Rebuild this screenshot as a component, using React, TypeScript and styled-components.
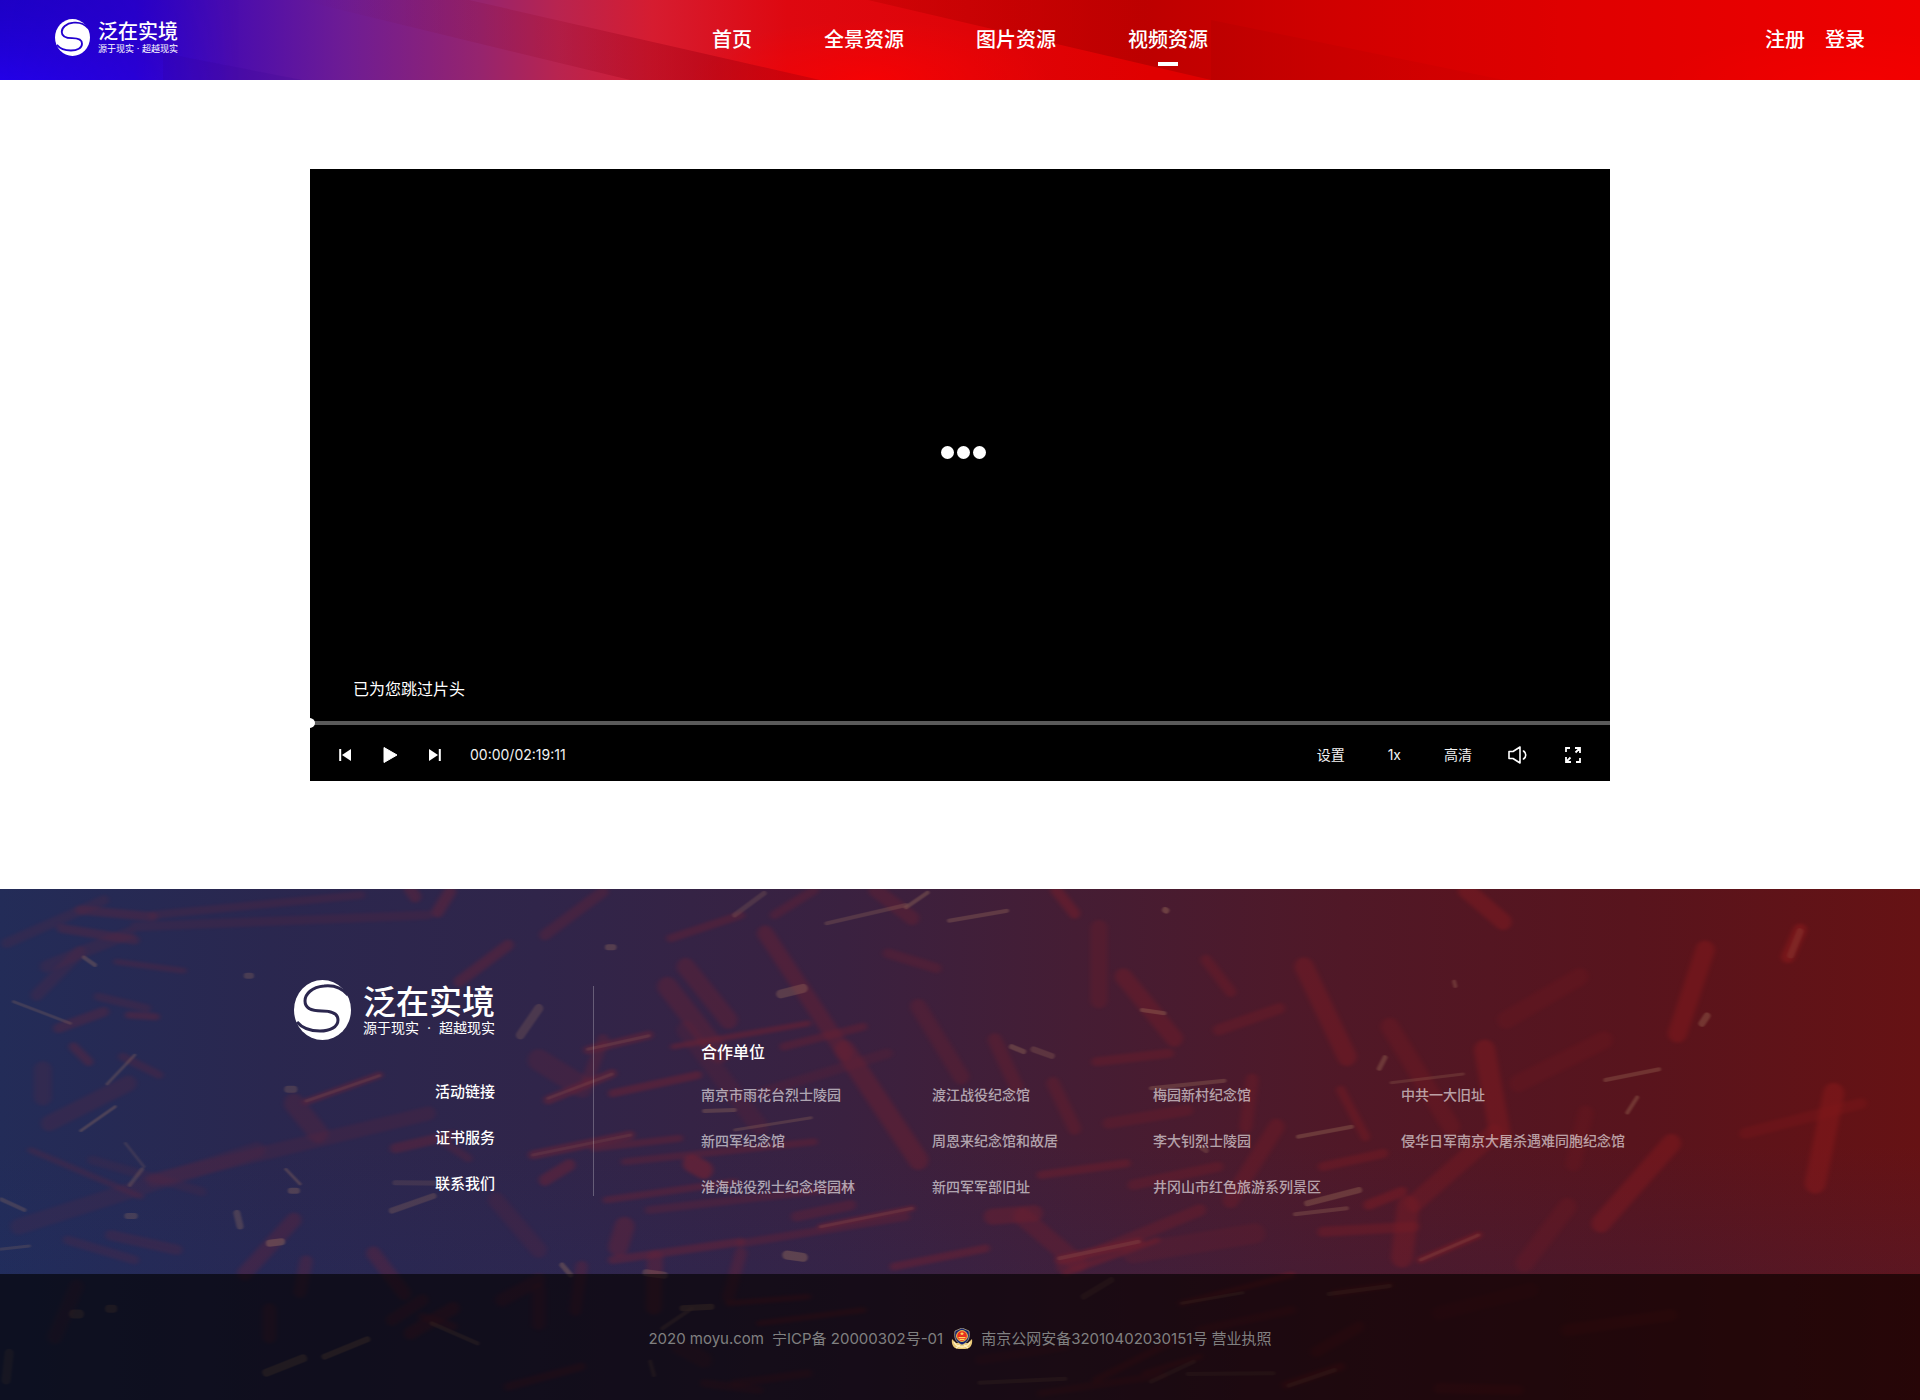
import React, { useId } from "react";
import styled, { createGlobalStyle, css } from "styled-components";

const GlobalStyle = createGlobalStyle`
  *, *::before, *::after { box-sizing: border-box; }
  body {
    margin: 0;
    background: #fff;
    color: #fff;
    font-family: Inter, "Noto Sans CJK SC", sans-serif;
  }
  ul { list-style: none; margin: 0; padding: 0; }
  h2, p { margin: 0; }
  a { color: inherit; text-decoration: none; white-space: nowrap; }
  li a { display: block; }
`;

const Page = styled.div`
  min-height: 100vh;
  display: flex;
  flex-direction: column;
`;

/* ---------- header ---------- */

const Header = styled.header`
  position: relative;
  isolation: isolate;
  height: 80px;
  padding: 0 55px;
  display: grid;
  grid-template-columns: 1fr auto 1fr;
  align-items: center;
  background: linear-gradient(
    90deg,
    #2000d0 0%,
    #2a00cc 7%,
    #4a0cae 12%,
    #6e1c94 18%,
    #96246e 25%,
    #b82450 29%,
    #d61c30 34%,
    #de0810 41%,
    #e00000 60%,
    #de0000 80%,
    #ee0000 100%
  );
`;

const Backdrop = styled.svg`
  position: absolute;
  inset: 0;
  z-index: -1;
  width: 100%;
  height: 100%;
`;

const Nav = styled.nav`
  display: flex;
  gap: 72px;
`;

const Account = styled.div`
  display: flex;
  justify-content: flex-end;
  gap: 20px;
`;

const NavLink = styled.a<{ $active?: boolean }>`
  position: relative;
  font-size: 20px;
  line-height: 30px;
  font-weight: 500;
  ${(p) =>
    p.$active &&
    css`
      &::after {
        content: "";
        position: absolute;
        left: calc(50% - 10px);
        top: 37px;
        width: 20px;
        height: 4px;
        background: #fff;
      }
    `}
`;

/* ---------- logo ---------- */

type Size = { $large?: boolean };

const LogoLink = styled.a<Size>`
  display: flex;
  align-items: flex-start;
  justify-self: start;
  gap: ${(p) => (p.$large ? 12 : 8)}px;
  margin-bottom: ${(p) => (p.$large ? 0 : 5)}px;
`;

const Emblem = styled.svg<Size>`
  flex: none;
  width: ${(p) => (p.$large ? 57 : 35)}px;
  height: ${(p) => (p.$large ? 60 : 37)}px;
`;

const LogoText = styled.span<Size>`
  display: grid;
  padding-top: ${(p) => (p.$large ? 5 : 2)}px;
  line-height: 1;
`;

const LogoName = styled.span<Size>`
  font-size: ${(p) => (p.$large ? 33 : 20)}px;
  line-height: ${(p) => (p.$large ? 34 : 22)}px;
  font-weight: 500;
`;

const LogoMotto = styled.span<Size>`
  display: flex;
  justify-content: space-between;
  font-size: ${(p) => (p.$large ? 14 : 9)}px;
  line-height: ${(p) => (p.$large ? 18 : 12)}px;
`;

function Logo({ large }: { large?: boolean }) {
  const id = useId();
  return (
    <LogoLink href="#" $large={large}>
      <Emblem $large={large} viewBox="0 0 57 60" preserveAspectRatio="none" aria-hidden="true">
        <mask id={id}>
          <ellipse cx="28.5" cy="30" rx="28.5" ry="30" fill="#fff" />
          <path
            d="M54 15C48 8 39 5 30 6C18 7 11 14 11 21C11 29 18 31 28 31C38 31 44 33 44 40C44 47 36 51 26 51C16 51 8 48 3 42"
            fill="none"
            stroke="#000"
            strokeWidth="3"
          />
        </mask>
        <rect width="57" height="60" fill="#fff" mask={`url(#${id})`} />
      </Emblem>
      <LogoText $large={large}>
        <LogoName $large={large}>泛在实境</LogoName>
        <LogoMotto $large={large}>
          <span>源于现实</span>
          <span>·</span>
          <span>超越现实</span>
        </LogoMotto>
      </LogoText>
    </LogoLink>
  );
}

/* ---------- player ---------- */

const Main = styled.main`
  padding: 89px 24px 108px;
`;

const Player = styled.section`
  max-width: 1300px;
  height: 612px;
  margin: 0 auto;
  display: flex;
  flex-direction: column;
  background: #000;
`;

const Stage = styled.div`
  flex: 1;
  display: flex;
  flex-direction: column;
  align-items: center;
  padding: 277px 43px 18px;
`;

const Loader = styled.div`
  display: flex;
  gap: 3px;
  padding-left: 6px;
  margin-bottom: auto;
`;

const LoaderDot = styled.span`
  width: 13px;
  height: 13px;
  border-radius: 50%;
  background: #fff;
`;

const Notice = styled.p`
  align-self: flex-start;
  font-size: 16px;
  line-height: 22px;
`;

const Seek = styled.input`
  appearance: none;
  display: block;
  width: calc(100% + 6px);
  height: 10px;
  margin: 0 0 0 -6px;
  background: linear-gradient(#5a5a5a, #5a5a5a) center / 100% 4px no-repeat;
  &::-webkit-slider-thumb {
    appearance: none;
    width: 11px;
    height: 10px;
    border-radius: 50%;
    background: #fff;
  }
`;

const SeekClip = styled.div`
  overflow: hidden;
`;

const Controls = styled.div`
  display: flex;
  justify-content: space-between;
  align-items: center;
  height: 53px;
  padding: 1px 28px 0;
`;

const ControlGroup = styled.div<{ $gap: number }>`
  display: flex;
  align-items: center;
  gap: ${(p) => p.$gap}px;
`;

const ControlButton = styled.button`
  display: flex;
  align-items: center;
  padding: 0;
  border: 0;
  background: none;
  color: #f2f2f2;
  font: inherit;
  font-size: 14px;
  line-height: 20px;
  cursor: pointer;
`;

const Time = styled.span`
  font-size: 14px;
  line-height: 20px;
  color: #f2f2f2;
`;

/* ---------- footer ---------- */

const Footer = styled.footer`
  position: relative;
  isolation: isolate;
  flex: 1;
  display: flex;
  flex-direction: column;
  background:
    linear-gradient(180deg, rgba(20, 50, 120, 0) 50%, rgba(20, 50, 120, 0.12) 75%, rgba(20, 50, 120, 0) 76%),
    linear-gradient(
      90deg,
      #232c58 0%,
      #2a274f 14%,
      #30254a 28%,
      #3a2140 44%,
      #451d34 56%,
      #501827 70%,
      #58141d 85%,
      #661214 100%
    );
`;

const Sparks = styled(Backdrop)`
  overflow: hidden;
`;

const Soft = styled.g<{ $blur: number; $opacity: number }>`
  filter: blur(${(p) => p.$blur}px);
  opacity: ${(p) => p.$opacity};
`;

const FooterBody = styled.div`
  width: 100%;
  max-width: 1332px;
  margin: 0 auto;
  padding: 91px 0 76px;
  display: flex;
  align-items: flex-start;
`;

const Brand = styled.div`
  display: grid;
  justify-items: end;
  gap: 41px;
`;

const BrandLinks = styled.ul`
  display: grid;
  gap: 24px;
  font-size: 15px;
  line-height: 22px;
  font-weight: 500;
`;

const Divider = styled.div`
  width: 1px;
  height: 210px;
  margin: 6px 107px 0 98px;
  background: rgba(255, 255, 255, 0.26);
`;

const Partners = styled.section`
  flex: 1;
  padding-top: 60px;
`;

const PartnersTitle = styled.h2`
  margin-bottom: 20px;
  font-size: 16px;
  line-height: 24px;
  font-weight: 500;
`;

const PartnerGrid = styled.ul`
  display: grid;
  grid-template-columns: 231px 221px 248px 1fr;
  row-gap: 24px;
  font-size: 14px;
  line-height: 22px;
  font-weight: 500;
  color: rgba(255, 255, 255, 0.6);
`;

const Legal = styled.div`
  flex: 1;
  min-height: 124px;
  padding: 4px 0 0;
  display: flex;
  justify-content: center;
  align-items: center;
  gap: 8px;
  background: rgba(0, 0, 0, 0.62);
  color: #808080;
  font-size: 15px;
  line-height: 22px;
`;

const NAV = ["首页", "全景资源", "图片资源", "视频资源"];
const BRAND_LINKS = ["活动链接", "证书服务", "联系我们"];
const PARTNERS = [
  "南京市雨花台烈士陵园", "渡江战役纪念馆", "梅园新村纪念馆", "中共一大旧址",
  "新四军纪念馆", "周恩来纪念馆和故居", "李大钊烈士陵园", "侵华日军南京大屠杀遇难同胞纪念馆",
  "淮海战役烈士纪念塔园林", "新四军军部旧址", "井冈山市红色旅游系列景区",
];

/* x1, y1, x2, y2, width, opacity */
type Streak = [number, number, number, number, number, number];

const EMBERS: Streak[] = [
  [130, 90, 250, 110, 9, 0.4], [250, 105, 590, 45, 8, 0.28], [220, 140, 700, 105, 9, 0.25], [715, 95, 735, 35, 12, 0.55],
  [670, 28, 678, 50, 12, 0.5], [890, 165, 985, 35, 11, 0.4], [1095, 175, 1210, 105, 8, 0.45], [1265, 105, 1330, 30, 9, 0.4],
  [1430, 30, 1490, 115, 14, 0.4], [60, 345, 130, 215, 12, 0.28], [75, 260, 210, 160, 12, 0.25], [100, 145, 220, 180, 9, 0.4],
  [10, 190, 170, 60, 10, 0.25], [190, 245, 300, 272, 6, 0.35], [750, 305, 830, 195, 11, 0.5], [95, 445, 170, 395, 10, 0.42],
  [210, 405, 255, 410, 7, 0.5], [160, 350, 240, 385, 8, 0.3], [70, 570, 70, 650, 18, 0.25], [80, 730, 210, 610, 16, 0.28],
  [120, 500, 145, 545, 9, 0.5], [200, 530, 260, 585, 8, 0.35], [500, 665, 620, 585, 7, 0.6], [480, 670, 520, 760, 20, 0.35],
  [250, 900, 700, 700, 14, 0.25], [30, 1040, 420, 810, 16, 0.22], [50, 810, 230, 950, 6, 0.35], [150, 840, 330, 935, 9, 0.2],
  [400, 1180, 480, 1020, 15, 0.42], [500, 1145, 490, 1235, 13, 0.4], [610, 1120, 660, 1240, 14, 0.45], [180, 1065, 290, 1110, 10, 0.3],
  [110, 1080, 220, 1140, 9, 0.28], [645, 805, 740, 765, 10, 0.5], [720, 780, 765, 835, 8, 0.35], [870, 825, 1030, 765, 9, 0.6],
  [890, 900, 930, 855, 12, 0.6], [895, 660, 1000, 580, 9, 0.62], [1000, 640, 1140, 585, 8, 0.6], [960, 510, 1060, 465, 9, 0.55],
  [880, 540, 950, 620, 22, 0.3], [960, 600, 985, 480, 12, 0.4], [1090, 320, 1175, 520, 20, 0.42], [1120, 260, 1190, 420, 18, 0.42],
  [1250, 160, 1380, 520, 16, 0.48], [1380, 510, 1500, 840, 20, 0.5], [1100, 500, 1320, 430, 6, 0.6], [1280, 500, 1410, 440, 8, 0.45],
  [1020, 845, 1330, 785, 7, 0.45], [970, 805, 1110, 775, 7, 0.5], [990, 960, 1200, 905, 7, 0.5], [1060, 990, 1390, 920, 8, 0.38],
  [1340, 1040, 1490, 985, 6, 0.68], [1300, 1010, 1390, 975, 10, 0.42], [1000, 1140, 1210, 1085, 8, 0.55], [1210, 1090, 1480, 1010, 8, 0.42],
  [1020, 1040, 1010, 1100, 20, 0.5], [1070, 1135, 1068, 1280, 16, 0.5], [1210, 1120, 1190, 1250, 12, 0.42], [1460, 1160, 1610, 1105, 8, 0.55],
  [810, 960, 880, 1110, 16, 0.25], [1450, 220, 1530, 265, 10, 0.35], [950, 1160, 940, 1290, 12, 0.42], [880, 1230, 880, 1330, 14, 0.4],
  [1120, 450, 1240, 740, 18, 0.25], [1500, 380, 1570, 590, 16, 0.35], [1130, 850, 1150, 870, 18, 0.8], [1240, 640, 1450, 520, 10, 0.25],
  [1725, 30, 1755, 100, 11, 0.6], [1795, 145, 1795, 360, 17, 0.32], [1835, 290, 1918, 475, 17, 0.48], [1970, 240, 2010, 335, 11, 0.42],
  [2130, 260, 2200, 530, 19, 0.52], [2270, 440, 2370, 740, 18, 0.35], [2395, 30, 2455, 125, 17, 0.62], [2425, 510, 2450, 760, 21, 0.6],
  [2440, 760, 2310, 970, 18, 0.45], [2785, 210, 2740, 460, 19, 0.6], [2730, 790, 2615, 1030, 19, 0.6], [2995, 640, 2965, 910, 21, 0.65],
  [1625, 480, 1660, 620, 14, 0.38], [1720, 610, 1755, 745, 13, 0.38], [2085, 740, 2010, 960, 16, 0.42], [2045, 600, 2035, 740, 13, 0.4],
  [2300, 980, 2290, 1130, 22, 0.52], [2190, 630, 2230, 770, 9, 0.5], [1990, 450, 2090, 385, 11, 0.4], [1790, 545, 1910, 520, 9, 0.42],
  [1670, 1010, 1760, 1150, 18, 0.42], [1620, 1010, 1690, 1000, 16, 0.5], [1735, 1160, 1960, 990, 12, 0.42], [1730, 1140, 1860, 1085, 9, 0.68],
  [1740, 1180, 1890, 1080, 6, 0.6], [2160, 860, 2260, 820, 9, 0.5], [2160, 1055, 2310, 1040, 10, 0.5], [2235, 975, 2290, 935, 10, 0.6],
  [2320, 1140, 2415, 1065, 7, 0.65], [1700, 885, 1840, 850, 8, 0.5], [1850, 915, 1990, 860, 10, 0.4], [1810, 730, 1940, 690, 11, 0.35],
  [2460, 420, 2580, 290, 18, 0.22], [2480, 610, 2620, 480, 18, 0.22], [2590, 700, 2570, 850, 16, 0.22],
  [2560, 980, 2490, 1150, 18, 0.28], [2850, 760, 3040, 670, 11, 0.35], [2920, 230, 2940, 150, 13, 0.75], [1850, 1120, 2050, 1060, 20, 0.25],
  [1240, 1330, 1410, 1290, 6, 0.6], [1190, 1270, 1320, 1250, 6, 0.6], [1200, 1510, 1320, 1480, 8, 0.42], [90, 1370, 125, 1220, 15, 0.3],
  [640, 1320, 690, 1260, 12, 0.42], [670, 1360, 740, 1285, 13, 0.5], [820, 1260, 880, 1200, 13, 0.4], [830, 1520, 950, 1460, 8, 0.5],
  [440, 1290, 440, 1370, 14, 0.42], [2180, 1240, 2270, 1215, 7, 0.5], [1930, 1270, 2110, 1185, 6, 0.6], [1790, 1500, 1930, 1370, 7, 0.5],
  [1870, 1480, 1960, 1430, 6, 0.5], [2100, 1515, 2190, 1460, 8, 0.6], [2150, 1415, 2220, 1340, 11, 0.42], [1960, 1350, 2110, 1290, 8, 0.4],
  [2350, 1300, 2500, 1230, 14, 0.25], [2560, 1350, 2730, 1305, 12, 0.4], [1700, 1540, 1900, 1485, 7, 0.4], [2350, 1525, 2480, 1530, 10, 0.45],
  [1150, 1510, 1240, 1530, 8, 0.4], [1110, 1400, 1150, 1440, 16, 0.3], [740, 1340, 690, 1310, 8, 0.5], [1600, 1440, 1740, 1400, 9, 0.3],
];

const SPARKS: Streak[] = [
  [137, 232, 155, 255, 4, 0.6], [22, 365, 115, 430, 3, 0.45], [175, 612, 220, 525, 3, 0.55], [132, 752, 188, 680, 3, 0.6],
  [212, 915, 232, 868, 4, 0.5], [205, 790, 235, 860, 3, 0.35], [467, 868, 490, 912, 3, 0.6], [387, 1000, 392, 1038, 7, 0.55],
  [2, 958, 40, 990, 4, 0.5], [0, 1108, 48, 1098, 3, 0.4], [640, 992, 708, 948, 6, 0.5], [645, 908, 735, 910, 5, 0.35],
  [850, 465, 880, 385, 9, 0.45], [1275, 342, 1312, 325, 9, 0.6], [1350, 130, 1480, 75, 4, 0.5], [1480, 82, 1515, 38, 4, 0.65],
  [1200, 105, 1248, 40, 5, 0.42], [1550, 122, 1645, 92, 4, 0.6], [1150, 693, 1200, 690, 4, 0.6], [1200, 750, 1325, 713, 3, 0.5],
  [1285, 1125, 1312, 1132, 9, 0.7], [440, 1090, 460, 1085, 7, 0.7], [470, 628, 480, 628, 7, 0.5], [475, 932, 485, 932, 6, 0.6],
  [993, 202, 1002, 202, 6, 0.6], [403, 287, 410, 287, 6, 0.5], [208, 1008, 220, 1008, 6, 0.5], [918, 1155, 932, 1185, 5, 0.65],
  [1055, 1178, 1085, 1186, 7, 0.55], [1865, 390, 1902, 400, 4, 0.65], [1652, 500, 1672, 515, 5, 0.65], [1688, 508, 1718, 528, 6, 0.5],
  [1880, 625, 2000, 602, 4, 0.6], [2120, 770, 2208, 740, 4, 0.65], [2253, 565, 2262, 533, 5, 0.65], [2272, 608, 2390, 582, 3, 0.45],
  [2622, 600, 2710, 568, 4, 0.6], [2658, 698, 2674, 652, 4, 0.65], [2780, 430, 2788, 408, 7, 0.65], [2375, 305, 2377, 318, 4, 0.6],
  [1903, 90, 1905, 92, 6, 0.75], [2135, 970, 2220, 930, 6, 0.65], [2115, 1003, 2200, 985, 4, 0.55], [1960, 800, 1970, 812, 5, 0.5],
  [1730, 1135, 1860, 1085, 4, 0.35], [1340, 1040, 1490, 985, 3, 0.3], [895, 655, 1000, 582, 3, 0.3], [500, 663, 620, 587, 3, 0.3],
  [960, 508, 1060, 467, 3, 0.35], [870, 825, 1030, 765, 3, 0.25], [2320, 1140, 2415, 1065, 3, 0.35], [2925, 225, 2940, 155, 7, 0.3],
  [1115, 1285, 1162, 1280, 6, 0.75], [435, 1478, 495, 1435, 8, 0.7], [530, 1430, 600, 1378, 6, 0.75], [705, 1330, 780, 1390, 4, 0.6],
  [1082, 1345, 1130, 1285, 4, 0.55], [1062, 1445, 1068, 1485, 4, 0.5], [15, 1420, 10, 1500, 9, 0.4], [120, 1302, 130, 1302, 9, 0.6],
  [178, 1286, 185, 1286, 8, 0.6], [2170, 1242, 2270, 1218, 4, 0.5], [1600, 1508, 1740, 1496, 4, 0.5], [1940, 1482, 2080, 1480, 4, 0.4],
  [2105, 1517, 2180, 1470, 4, 0.45], [1880, 1505, 1950, 1445, 4, 0.4], [1770, 1250, 1815, 1200, 6, 0.4], [1930, 1270, 2030, 1238, 3, 0.5],
];

function Lines({ items, color }: { items: Streak[]; color: string }) {
  return (
    <g stroke={color} strokeLinecap="round">
      {items.map(([x1, y1, x2, y2, w, o], i) => (
        <line key={i} x1={x1} y1={y1} x2={x2} y2={y2} strokeWidth={w} strokeOpacity={o} vectorEffect="non-scaling-stroke" />
      ))}
    </g>
  );
}

function HeaderBackdrop() {
  return (
    <Backdrop viewBox="0 0 1920 80" preserveAspectRatio="none" aria-hidden="true">
      <defs>
        <linearGradient id="band-left"><stop offset="0" stopColor="#600030" stopOpacity="0" /><stop offset=".5" stopColor="#900020" stopOpacity=".2" /><stop offset=".8" stopColor="#a80010" stopOpacity=".5" /><stop offset="1" stopColor="#b80008" stopOpacity=".5" /></linearGradient>
        <linearGradient id="band-mid"><stop offset="0" stopColor="#b80000" stopOpacity=".4" /><stop offset=".4" stopColor="#b40000" stopOpacity=".8" /><stop offset="1" stopColor="#c80000" stopOpacity="0" /></linearGradient>
        <linearGradient id="band-right"><stop offset="0" stopColor="#a80000" stopOpacity=".5" /><stop offset="1" stopColor="#b80000" stopOpacity=".3" /></linearGradient>
        <radialGradient id="glow-mid"><stop offset="0" stopColor="#ff0000" stopOpacity=".7" /><stop offset="1" stopColor="#ff0000" stopOpacity="0" /></radialGradient>
        <linearGradient id="glow-left" x1="0" y1="1" x2="0" y2="0"><stop offset="0" stopColor="#2600ff" stopOpacity=".5" /><stop offset="1" stopColor="#1800b0" stopOpacity=".3" /></linearGradient>
        <linearGradient id="fade-left"><stop offset="0" stopColor="#fff" /><stop offset="1" stopColor="#000" /></linearGradient>
        <mask id="left-mask"><rect width="240" height="80" fill="url(#fade-left)" /></mask>
      </defs>
      <rect width="240" height="80" fill="url(#glow-left)" mask="url(#left-mask)" />
      <path d="M163 53L302 80H163Z" fill="#30008c" opacity=".15" />
      <ellipse cx="870" cy="80" rx="180" ry="60" fill="url(#glow-mid)" />
      <path d="M300 0H469L820 80H630Z" fill="url(#band-left)" />
      <path d="M868 0H1560V80H1211Z" fill="url(#band-mid)" />
      <path d="M1211 20L1504 80H1211Z" fill="url(#band-right)" opacity=".5" />
      <ellipse cx="1860" cy="80" rx="200" ry="50" fill="url(#glow-mid)" opacity=".5" />
    </Backdrop>
  );
}

function PoliceBadge() {
  return (
    <svg width="22" height="22" viewBox="0 0 22 22" role="img" aria-label="公安备案">
      <path d="M1 11C0 17 3 21 8 21H14C19 21 22 17 21 11L17 15H5Z" fill="#e9c877" />
      <path d="M3 14C5 18 8 19 11 19S17 18 19 14M5 20L9 17M17 20L13 17" fill="none" stroke="#fff0c0" strokeWidth="1.3" />
      <path d="M11 0L18 3C19 9 18 14 11 17C4 14 3 9 4 3Z" fill="#15246e" stroke="#e8d9a0" strokeWidth=".6" />
      <circle cx="11" cy="8" r="5.4" fill="#e8301f" stroke="#f4c84c" strokeWidth="1" />
      <path d="M11 3.6L11.6 5H13L12 6L12.300 7.300L11 6.600L9.700 7.300L10 6L9 5H10.400ZM7.500 9H14.500V10.300H7.500ZM8.500 11H13.500V12H8.500Z" fill="#ffd65a" />
    </svg>
  );
}

export default function App() {
  return (
    <Page>
      <GlobalStyle />
      <Header>
        <HeaderBackdrop />
        <Logo />
        <Nav>
          {NAV.map((label) => (
            <NavLink key={label} href="#" $active={label === "视频资源"}>{label}</NavLink>
          ))}
        </Nav>
        <Account>
          <NavLink href="#">注册</NavLink>
          <NavLink href="#">登录</NavLink>
        </Account>
      </Header>

      <Main>
        <Player>
          <Stage>
            <Loader><LoaderDot /><LoaderDot /><LoaderDot /></Loader>
            <Notice>已为您跳过片头</Notice>
          </Stage>
          <SeekClip>
            <Seek type="range" min="0" max="8351" defaultValue="0" aria-label="播放进度" />
          </SeekClip>
          <Controls>
            <ControlGroup $gap={29}>
              <ControlButton type="button" aria-label="上一个">
                <svg width="14" height="16" viewBox="0 0 14 16"><path d="M2.200 2V14" stroke="#fff" strokeWidth="2" /><path d="M13 2V14L4 8Z" fill="#fff" /></svg>
              </ControlButton>
              <ControlButton type="button" aria-label="播放">
                <svg width="18" height="18" viewBox="0 0 18 18"><path d="M3 1.500L16 9L3 16.500Z" fill="#fff" stroke="#fff" strokeLinejoin="round" /></svg>
              </ControlButton>
              <ControlButton type="button" aria-label="下一个">
                <svg width="13" height="16" viewBox="0 0 13 16"><path d="M11.800 2V14" stroke="#fff" strokeWidth="2" /><path d="M1 2V14L10 8Z" fill="#fff" /></svg>
              </ControlButton>
              <Time>00:00/02:19:11</Time>
            </ControlGroup>
            <ControlGroup $gap={36}>
              <ControlGroup $gap={43}>
                <ControlButton type="button">设置</ControlButton>
                <ControlButton type="button">1x</ControlButton>
                <ControlButton type="button">高清</ControlButton>
              </ControlGroup>
              <ControlButton type="button" aria-label="音量">
                <svg width="20" height="18" viewBox="0 0 20 18" fill="none" stroke="#fff" strokeWidth="1.600" strokeLinejoin="round"><path d="M1 5.500H5L12 1V17L5 12.500H1Z" /><path d="M15.500 5C18.500 7 18.500 11 15.500 13" strokeLinecap="round" /></svg>
              </ControlButton>
              <ControlButton type="button" aria-label="全屏">
                <svg width="18" height="16" viewBox="0 0 18 16" fill="none" stroke="#fff" strokeWidth="1.800"><path d="M2 5V1H6M11 1H16V6M16 1L11.500 5.500M16 11V15H12M7 15H2V10M2 15L6.500 10.500" /></svg>
              </ControlButton>
            </ControlGroup>
          </Controls>
        </Player>
      </Main>

      <Footer>
        <Sparks viewBox="0 27 3136 1533" preserveAspectRatio="none" aria-hidden="true">
          <Soft $blur={4} $opacity={0.4}><Lines items={EMBERS} color="#b02020" /></Soft>
          <Soft $blur={2} $opacity={0.5}><Lines items={SPARKS} color="#a87c60" /></Soft>
        </Sparks>
        <FooterBody>
          <Brand>
            <Logo large />
            <BrandLinks>
              {BRAND_LINKS.map((label) => <li key={label}><a href="#">{label}</a></li>)}
            </BrandLinks>
          </Brand>
          <Divider />
          <Partners>
            <PartnersTitle>合作单位</PartnersTitle>
            <PartnerGrid>
              {PARTNERS.map((name) => <li key={name}><a href="#">{name}</a></li>)}
            </PartnerGrid>
          </Partners>
        </FooterBody>
        <Legal>
          <span>2020 moyu.com</span>
          <a href="#">宁ICP备 20000302号-01</a>
          <PoliceBadge />
          <a href="#">南京公网安备32010402030151号 营业执照</a>
        </Legal>
      </Footer>
    </Page>
  );
}
